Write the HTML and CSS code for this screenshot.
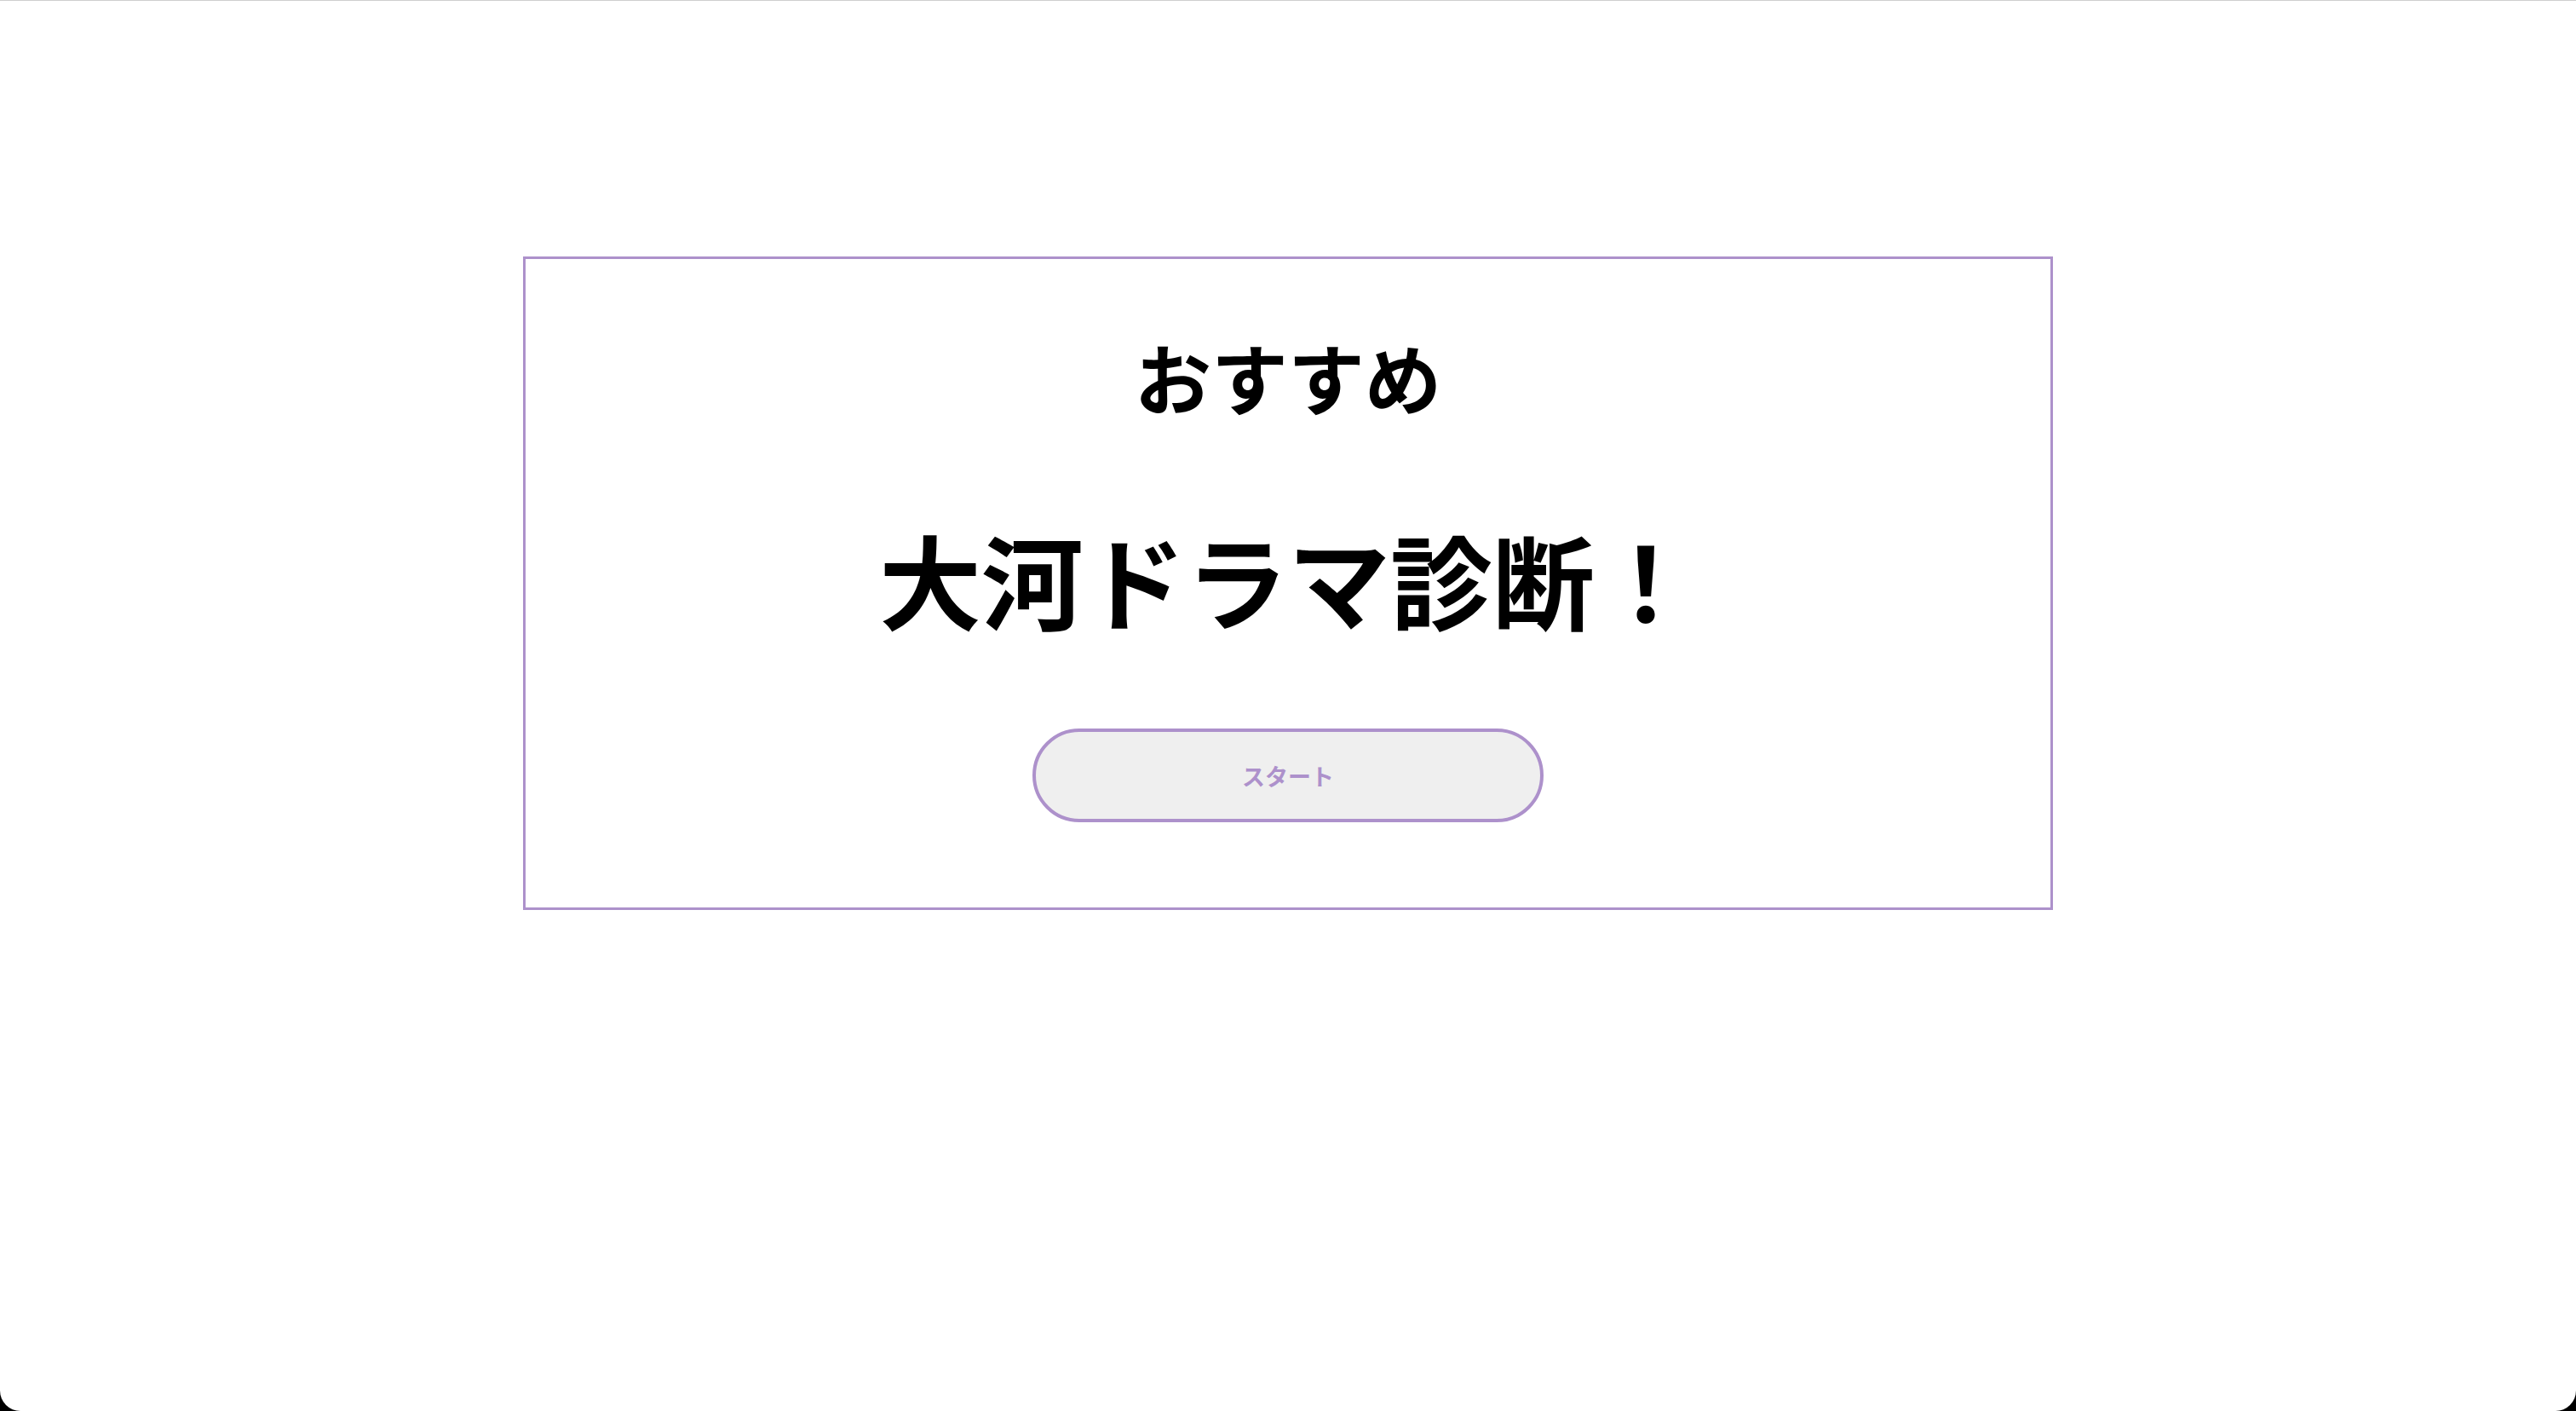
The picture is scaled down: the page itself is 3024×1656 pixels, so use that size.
FILE: index.html
```html
<!DOCTYPE html>
<html lang="ja">
<head>
<meta charset="utf-8">
<title>大河ドラマ診断！</title>
<link rel="stylesheet" href="styles.css">
</head>
<body>
<div class="page">
  <main class="card">
    <p class="eyebrow">おすすめ</p>
    <h1 class="title">大河ドラマ診断！</h1>
    <button class="start" type="button">スタート</button>
  </main>
</div>
</body>
</html>
```
FILE: styles.css
```css
html {
  margin: 0;
  height: 100%;
  background: #000;
}
body {
  margin: 0;
  height: 100%;
  font-family: "Noto Sans CJK JP", "Noto Sans", sans-serif;
}
.page {
  box-sizing: border-box;
  height: 100%;
  background: #fff;
  border-top: 1px solid #cfcfcf;
  border-radius: 0 0 24px 24px;
  padding-top: 300px;
}
.card {
  box-sizing: border-box;
  width: 1796px;
  margin: 0 auto;
  border: 3px solid #ad91cb;
  padding: 83px 0 100px;
  display: flex;
  flex-direction: column;
  align-items: center;
}
.eyebrow {
  margin: 0;
  font-size: 90px;
  line-height: 108px;
  font-weight: 700;
  color: #000;
}
.title {
  margin: 112px 0 0;
  font-size: 120px;
  line-height: 144px;
  font-weight: 700;
  color: #000;
}
.start {
  box-sizing: border-box;
  margin-top: 104px;
  width: 600px;
  height: 110px;
  border: 4px solid #ad91cb;
  border-radius: 55px;
  background: #efefef;
  color: #ad91cb;
  font-family: "Noto Sans CJK JP", sans-serif;
  font-size: 27px;
  font-weight: 700;
  padding: 0;
}
```
